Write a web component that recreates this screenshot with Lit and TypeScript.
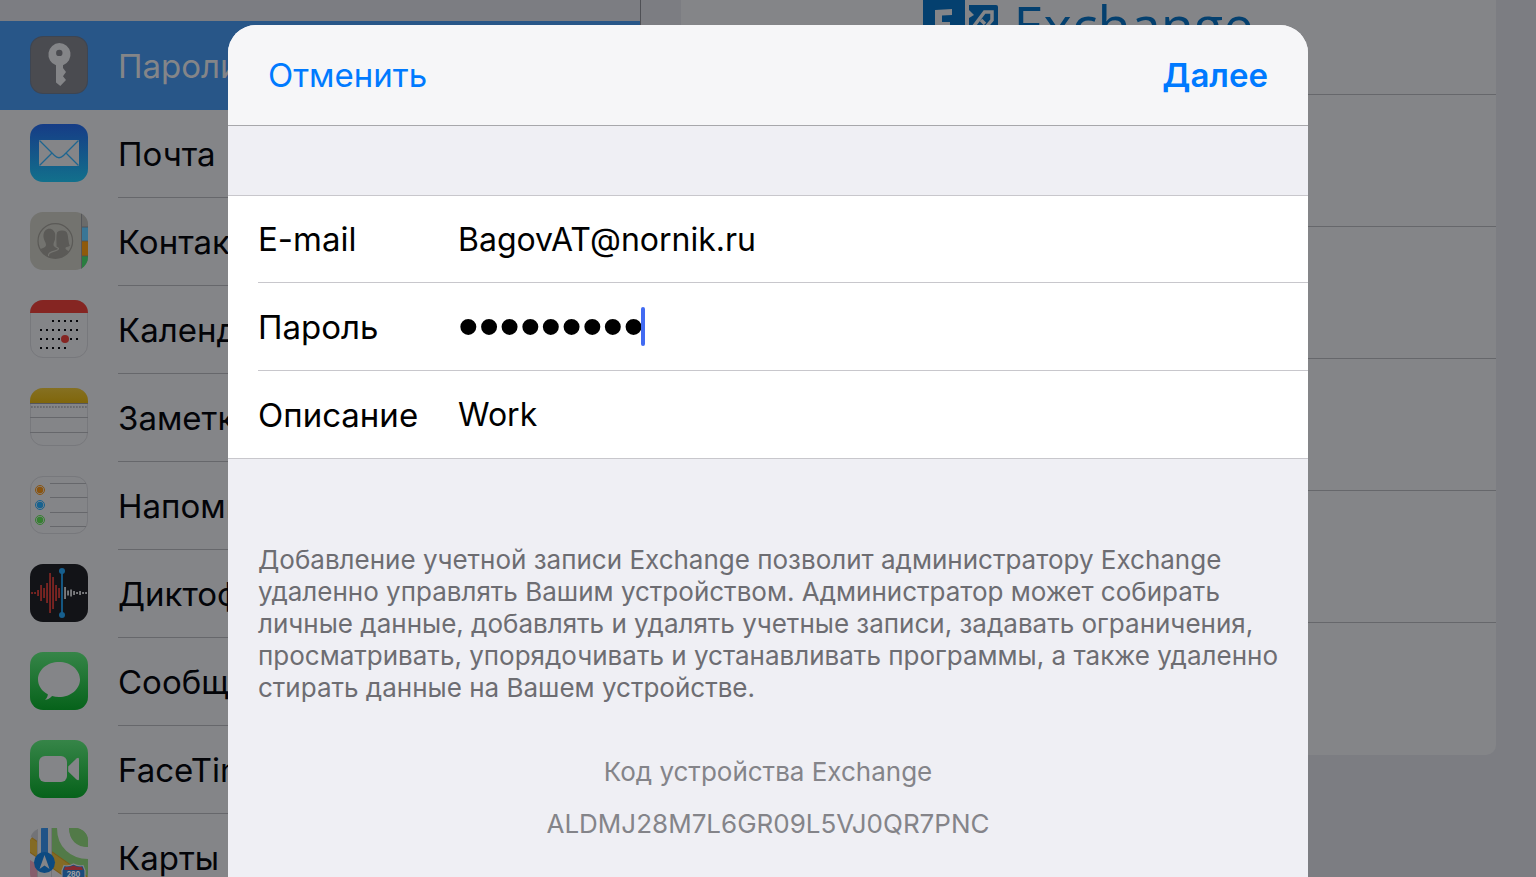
import { LitElement, html, svg, css } from "lit";
import { customElement, property } from "lit/decorators.js";

const dots = () => {
  const rows = [
    { y: 21, from: 23, to: 47 },
    { y: 30, from: 11, to: 47 },
    { y: 39, from: 11, to: 47 },
    { y: 48, from: 11, to: 35 },
  ];
  const out: unknown[] = [];
  for (const r of rows)
    for (let x = r.from; x <= r.to; x += 6)
      out.push(svg`<rect x=${x - 1} y=${r.y - 1} width="2" height="2" fill="#05060a"/>`);
  return out;
};

const wave = (heights: number[], start: number, fill: string) =>
  heights.map((h, i) => svg`<rect x=${start + i * 3 - 0.8} y=${29 - h / 2} width="1.7" height=${h} fill=${fill}/>`);

const icons: Record<string, unknown> = {
  key: svg`
    <rect width="58" height="58" rx="13" fill="#3d4552"/>
    <rect x="1" y="1" width="56" height="56" rx="12" fill="#4a4b50"/>
    <path fill="#848588" fill-rule="evenodd" d="M29.300 7a11.500 11.500 0 0 1 3.700 22.300V32l3 4-3 4.300 3 3.700-5.700 6L26 46.500V29.300A11.500 11.500 0 0 1 29.300 7Zm0 6.700a3.200 3.200 0 1 0 0 6.400 3.200 3.200 0 0 0 0-6.400Z"/>`,
  mail: svg`
    <defs><linearGradient id="g" x2="0" y2="1"><stop stop-color="#163c86"/><stop offset="1" stop-color="#12708c"/></linearGradient></defs>
    <rect width="58" height="58" rx="13" fill="url(#g)"/>
    <rect x="9" y="16" width="40" height="26" fill="#848588"/>
    <path d="M9.500 16.500 24.500 31.500q4.500 4.500 9 0L48.500 16.500M9.500 41.500 22 29M48.500 41.500 36 29" fill="none" stroke="#1d6590" stroke-width="1.300"/>`,
  contacts: svg`
    <defs><clipPath id="c"><rect width="58" height="58" rx="13"/></clipPath><clipPath id="r"><circle cx="25.300" cy="29" r="17"/></clipPath></defs>
    <g clip-path="url(#c)">
      <rect width="58" height="58" fill="#73736f"/>
      <rect x="51" width="7" height="15" fill="#6b6b6a"/>
      <rect x="51" y="15" width="7" height="14" fill="#397696"/>
      <rect x="51" y="29" width="7" height="15" fill="#8f5a0b"/>
      <rect x="51" y="44" width="7" height="14" fill="#2a7d40"/>
      <path d="M51.500 0v58" stroke="#55565a"/><path d="M52 15h6M52 29h6M52 44h6" stroke="#4e4f52" stroke-width=".8"/>
    </g>
    <g clip-path="url(#r)" fill="#5b5a57">
      <path d="M13.500 25c-1-11 12.500-11 12 0-.5 4-2 5-2 8 0 3 7 2 8 6v10H6V41c1-5 10-4 10-8 0-3-2-4-2.500-8Z"/>
      <path stroke="#73736f" stroke-width="1.200" d="M26 35c0-3-1-13 1-15.500 2-2 8-2 10 0 2.500 3 1 10 3.500 14.500-1 1.500-4 1-4.500 2 0 3 8 3 8.500 6v8H18.500V43c.5-5 10-3 10-6.500-.5-1-1.500-1-2.500-1.500Z"/>
    </g>
    <circle cx="25.300" cy="29" r="17.300" fill="none" stroke="#5b5a57" stroke-width="1.200"/>`,
  calendar: svg`
    <rect x=".5" y=".5" width="57" height="57" rx="12.500" fill="#848588" stroke="#77787c"/>
    <path d="M0 13A13 13 0 0 1 13 0h32a13 13 0 0 1 13 13Z" fill="#852522"/>
    ${dots()}<circle cx="35" cy="39" r="4.500" fill="#848588"/><circle cx="35" cy="39" r="4" fill="#852522"/>`,
  notes: svg`
    <defs><linearGradient id="g" x2="0" y2="1"><stop stop-color="#857022"/><stop offset="1" stop-color="#80660a"/></linearGradient></defs>
    <rect x=".5" y=".5" width="57" height="57" rx="12.500" fill="#848588" stroke="#77787c"/>
    <path d="M0 15v-2A13 13 0 0 1 13 0h32a13 13 0 0 1 13 13v2Z" fill="url(#g)"/>
    <path d="M0 15.500h58" stroke="#55565c"/><path d="M1 19h57" stroke="#696a6e" stroke-width="1.800" stroke-dasharray="1.700 1.300"/>
    <path d="M0 29.500h58M0 44.500h58" stroke="#66676b"/>`,
  reminders: svg`
    <rect x=".5" y=".5" width="57" height="57" rx="12.500" fill="#848588" stroke="#77787c"/>
    ${["#8a540f", "#17628f", "#368031"].map((f, i) => svg`<circle cx="10" cy=${14 + i * 15} r="4.500" fill="none" stroke=${f}/><circle cx="10" cy=${14 + i * 15} r="3.200" fill=${f}/>`)}
    <path d="M20 7.500h36M20 21.500h37.500M20 36.500h37.500M20 50.500h36" stroke="#66676b"/>`,
  voice: svg`
    <rect width="58" height="58" rx="13" fill="#121317"/>
    ${wave([2, 2, 6, 16, 10, 20, 40, 32, 16, 10], 2, "#842724")}
    ${wave([12, 5, 7, 4, 2, 4, 2, 2], 35, "#848588")}
    <path d="M32 7v44" stroke="#165f8e" stroke-width="1.800"/><circle cx="32" cy="7" r="3" fill="#165f8e"/><circle cx="32" cy="51" r="3" fill="#165f8e"/>`,
  messages: svg`
    <defs><linearGradient id="g" x2="0" y2="1"><stop stop-color="#368548"/><stop offset="1" stop-color="#06621a"/></linearGradient></defs>
    <rect width="58" height="58" rx="13" fill="url(#g)"/>
    <path d="M29 10c11.600 0 21 7.800 21 17.500S40.600 45 29 45c-2.500 0-4.800-.3-6.900-.9-2 2.200-4.600 3.600-7.100 3.900 1.600-1.600 2.900-3.700 2.800-5.700C11.800 39.200 8 33.700 8 27.500 8 17.800 17.400 10 29 10Z" fill="#848588"/>`,
  facetime: svg`
    <defs><linearGradient id="g" x2="0" y2="1"><stop stop-color="#368548"/><stop offset="1" stop-color="#06621a"/></linearGradient></defs>
    <rect width="58" height="58" rx="13" fill="url(#g)"/>
    <rect x="9" y="16" width="28" height="26" rx="6" fill="#848588"/>
    <path d="M38.200 26.500 46.500 18.500q2.500-1.800 2.500.8v19.400q0 2.600-2.500.8L38.200 31.500Z" fill="#848588"/>`,
  maps: svg`
    <defs><clipPath id="c"><rect width="58" height="58" rx="13"/></clipPath></defs>
    <g clip-path="url(#c)">
      <rect width="58" height="58" fill="#848588"/>
      <path d="M21 0h37v50L21 24Z" fill="#527a48"/>
      <path d="M0 0h8v14L0 8Z" fill="#727377"/>
      <path d="M0 32 8 37v21H0Z" fill="#855d6b"/>
      <path d="M33 0C33 16 44 25 58 25" fill="none" stroke="#848588" stroke-width="12"/>
      <path d="M39 0c1 11 8 18 19 19V0Z" fill="#527a48"/>
      <path d="M-2 15 58 57" stroke="#7b5b18" stroke-width="14"/><path d="M-2 15 58 57" stroke="#846b25" stroke-width="12"/>
      <path d="M14.500 0v58" stroke="#848588" stroke-width="14"/><path d="M7.500 0v58M21.500 0v58" stroke="#737478"/>
      <path d="M14.500 0v40" stroke="#205487" stroke-width="7"/>
      <circle cx="14.500" cy="34.500" r="10.500" fill="#0d4a80"/>
      <path d="m14.500 27 5 14-5-3.500-5 3.500Z" fill="#848588"/>
      <path d="M34 37.500q5 1 9.500-1.500 4.500 2.500 9.500 1.500l2 5v13H32v-13Z" fill="#1a4c7c" stroke="#848588" stroke-width="1.200"/>
      <path d="M35 39q4 .5 8.500-1.500 4.500 2 8.500 1.500l1 3H34Z" fill="#842a30"/>
    </g>
    <text x="43.500" y="49" text-anchor="middle" font-family="Inter, sans-serif" font-weight="700" font-size="7" fill="#a0a1a4">280</text>`,
};

@customElement("app-icon")
class AppIcon extends LitElement {
  @property() name = "";
  static styles = css`
    :host { display: block; flex: none; width: 58px; height: 58px; }
    svg { display: block; width: 100%; height: 100%; }
  `;
  render() {
    return html`<svg viewBox="0 0 58 58" aria-hidden="true">${icons[this.name]}</svg>`;
  }
}

const items = [
  ["key", "Пароли и учетные записи"],
  ["mail", "Почта"],
  ["contacts", "Контакты"],
  ["calendar", "Календарь"],
  ["notes", "Заметки"],
  ["reminders", "Напоминания"],
  ["voice", "Диктофон"],
  ["messages", "Сообщения"],
  ["facetime", "FaceTime"],
  ["maps", "Карты"],
];

@customElement("app-root")
class AppRoot extends LitElement {
  static styles = css`
    * { box-sizing: border-box; }
    :host {
      display: block;
      position: relative;
      height: 100vh;
      overflow: hidden;
      font-family: Inter, "Liberation Sans", sans-serif;
      font-size: 33px;
      line-height: 40px;
      color: #000;
      background: #7c7d82;
    }
    .split { display: flex; height: 100%; }
    .sidebar {
      flex: none;
      width: 641px;
      padding-top: 21px;
      border-right: 1px solid #4f5055;
      overflow: hidden;
    }
    .item {
      display: flex;
      align-items: center;
      gap: 30px;
      height: 88px;
      padding-left: 30px;
      background: #848588;
      color: #030408;
      text-decoration: none;
      white-space: nowrap;
    }
    .item app-icon { margin-bottom: 2px; }
    .item span {
      flex: 1;
      display: flex;
      align-items: center;
      height: 100%;
      border-bottom: 1px solid #66676b;
    }
    .item.active { height: 89px; padding-top: 1px; background: #285688; color: #848588; }
    .item.active span { border-color: transparent; }
    .detail { flex: 1; padding: 0 40px; }
    .providers {
      margin: 0;
      padding: 0;
      list-style: none;
      background: #848588;
      border-radius: 0 0 10px 10px;
    }
    .providers li { height: 132px; border-bottom: 1px solid #66676b; }
    .providers li.exchange {
      display: flex;
      justify-content: center;
      gap: 12px;
      height: 95px;
      color: #04406f;
      font-family: "Open Sans", "Noto Sans", sans-serif;
      font-size: 54px;
      font-weight: 500;
      line-height: 50px;
    }
    .providers li:last-child { border-bottom: 0; }
    .exchange svg { width: 78px; height: 56px; }
    .sheet {
      position: absolute;
      top: 25px;
      bottom: 0;
      left: 0;
      right: 0;
      width: min(1080px, 100%);
      margin: 0 auto;
      border-radius: 28px 28px 0 0;
      background: #efeff4;
      overflow: hidden;
    }
    .bar {
      display: flex;
      align-items: center;
      justify-content: space-between;
      height: 101px;
      padding: 0 40px;
      background: #f6f6f8;
      border-bottom: 1px solid #a7a7ab;
    }
    button {
      padding: 0;
      border: 0;
      background: none;
      font: inherit;
      color: #007aff;
      cursor: pointer;
    }
    .next { font-weight: 600; }
    .fields { margin-top: 69px; background: #fff; border: solid #c8c7cc; border-width: 1px 0; }
    .field { display: flex; align-items: center; height: 88px; margin-left: 30px; }
    .field:first-child { height: 86px; }
    .field + .field { border-top: 1px solid #c8c7cc; }
    label { flex: none; width: 200px; }
    input {
      flex: 1;
      min-width: 0;
      height: 60px;
      padding: 0;
      border: 0;
      outline: 0;
      background: none;
      font: inherit;
      font-size: 32px;
      color: #000;
    }
    input.password { flex: none; width: 183px; font-family: "Liberation Sans", sans-serif; font-size: 59px; }
    .caret { width: 4px; height: 39px; border-radius: 2px; background: #426bf2; }
    .notes { padding: 85px 20px 0 30px; color: #6d6d72; font-size: 26px; line-height: 32px; }
    .notes p { margin: 0; }
    .notes .code { padding-right: 10px; color: #848489; text-align: center; }
    .notes .heading { margin: 52px 0 20px; }
  `;

  render() {
    return html`
      <div class="split">
        <nav class="sidebar">
          ${items.map(([icon, label], i) => html`
            <a class="item ${i === 0 ? "active" : ""}" href="#${icon}">
              <app-icon name=${icon}></app-icon><span>${label}</span>
            </a>`)}
        </nav>
        <main class="detail">
          <ul class="providers">
            <li class="exchange">
              <svg viewBox="0 0 78 56" aria-hidden="true">
                <path d="M0 0h42v56H0Z" fill="#04406f"/>
                <path d="M12 10 29 9v6l-10 .5V22h8v6h-8v9h10v6H12Z" fill="#848588"/>
                <path d="M46 5h27q2 0 2 2v42H46Z" fill="#04406f"/>
                <path d="m46 10 5 5-5 3Z" fill="#848588"/>
                <path d="M51 26 61.500 12H69v8l-5 6M58 20l4 4" fill="none" stroke="#848588" stroke-width="3.500"/>
              </svg>
              Exchange
            </li>
            <li></li><li></li><li></li><li></li><li></li>
          </ul>
        </main>
      </div>
      <form class="sheet" role="dialog" aria-label="Exchange" @submit=${(e: Event) => e.preventDefault()}>
        <header class="bar">
          <button type="button">Отменить</button>
          <button type="submit" class="next">Далее</button>
        </header>
        <div class="fields">
          <div class="field">
            <label for="email">E-mail</label>
            <input id="email" type="email" value="BagovAT@nornik.ru" />
          </div>
          <div class="field">
            <label for="password">Пароль</label>
            <input id="password" class="password" type="password" value="123456789" />
            <span class="caret"></span>
          </div>
          <div class="field">
            <label for="description">Описание</label>
            <input id="description" type="text" value="Work" />
          </div>
        </div>
        <div class="notes">
          <p>Добавление учетной записи Exchange позволит администратору Exchange удаленно управлять Вашим устройством. Администратор может собирать личные данные, добавлять и удалять учетные записи, задавать ограничения, просматривать, упорядочивать и устанавливать программы, а также удаленно стирать данные на Вашем устройстве.</p>
          <p class="code heading">Код устройства Exchange</p>
          <p class="code">ALDMJ28M7L6GR09L5VJ0QR7PNC</p>
        </div>
      </form>
    `;
  }
}
